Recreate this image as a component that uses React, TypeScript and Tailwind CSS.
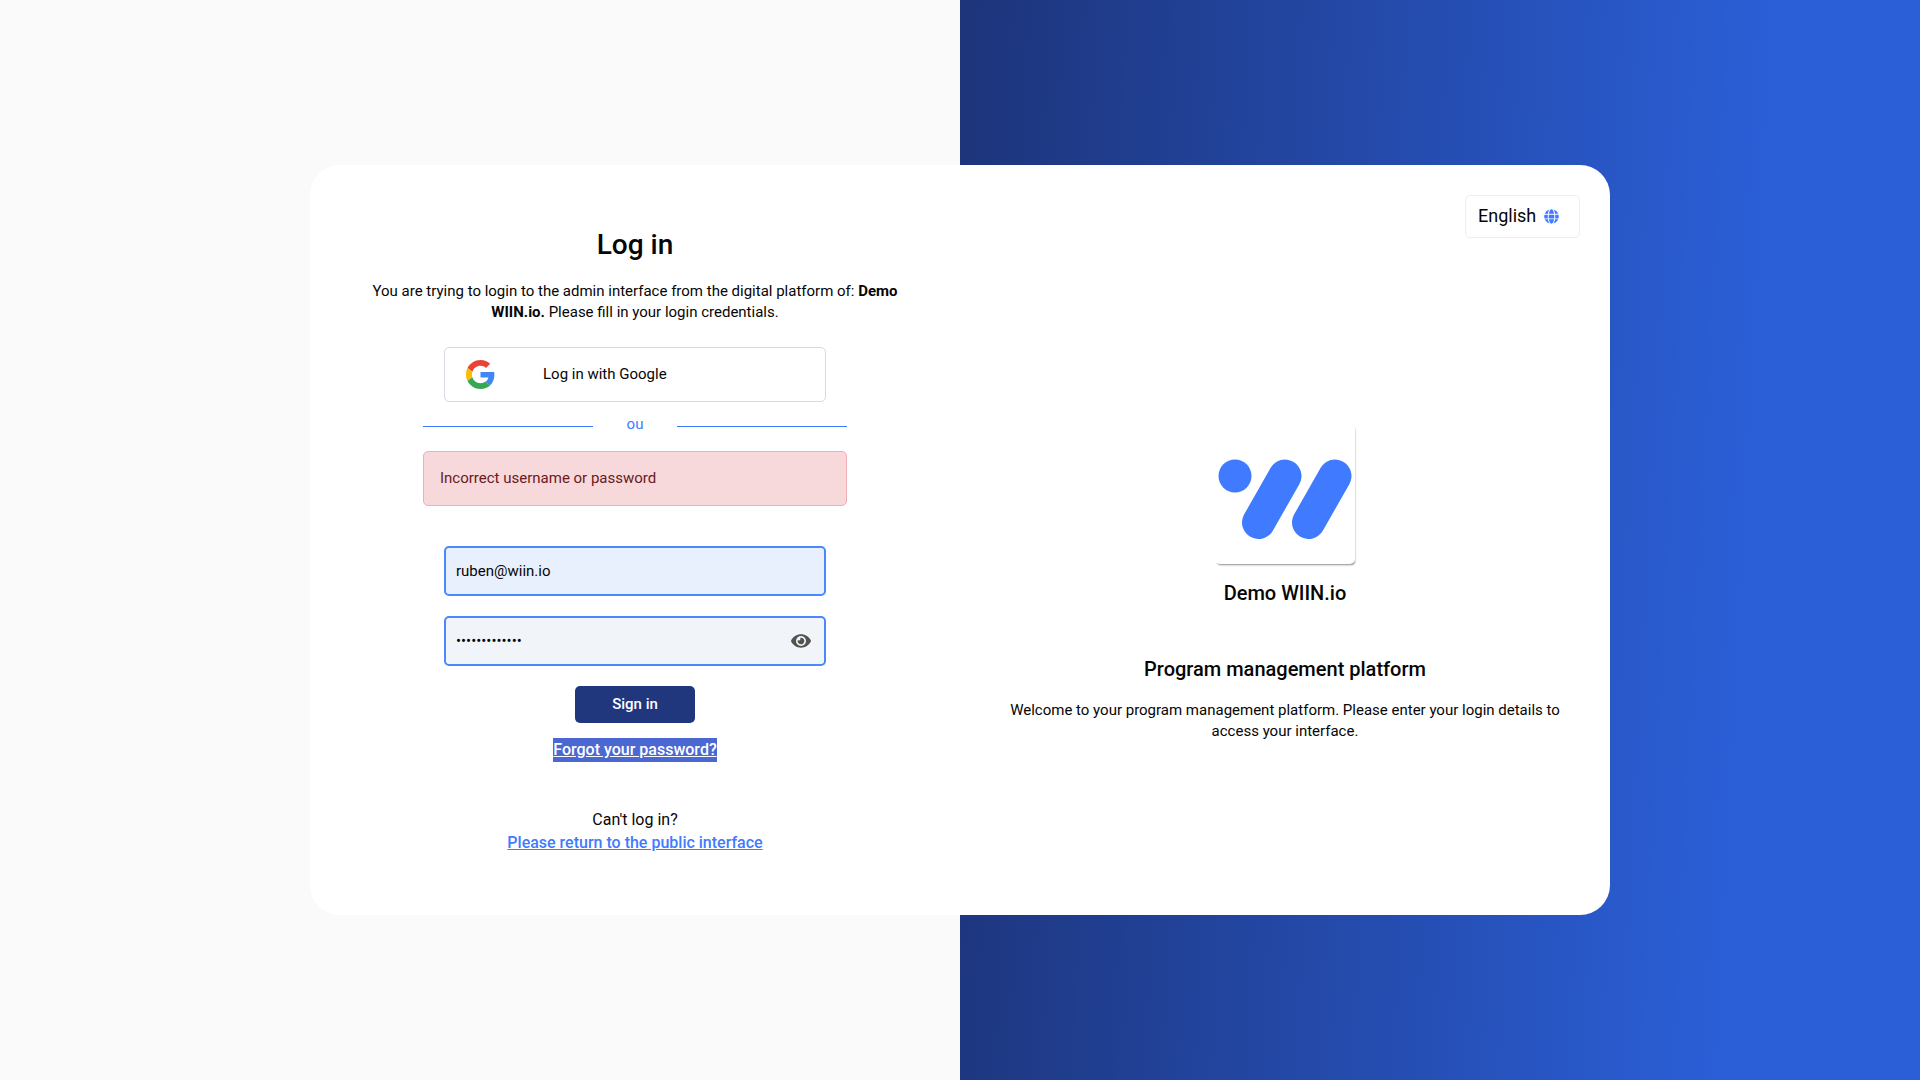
import { FaEye, FaGlobe } from "react-icons/fa";

function GoogleMark() {
  return (
    <svg viewBox="0 0 48 48" className="size-[29px] shrink-0" aria-hidden="true">
      <path fill="#EA4335" d="M24 9.5c3.54 0 6.71 1.22 9.21 3.6l6.85-6.85C35.9 2.38 30.47 0 24 0 14.62 0 6.51 5.38 2.56 13.22l7.98 6.19C12.43 13.72 17.74 9.5 24 9.5z" />
      <path fill="#4285F4" d="M46.98 24.55c0-1.57-.15-3.09-.38-4.55H24v9.02h12.94c-.58 2.96-2.26 5.48-4.78 7.18l7.73 6c4.51-4.18 7.09-10.36 7.09-17.65z" />
      <path fill="#FBBC05" d="M10.53 28.59c-.48-1.45-.76-2.99-.76-4.59s.27-3.14.76-4.59l-7.98-6.19C.92 16.46 0 20.12 0 24c0 3.88.92 7.54 2.56 10.78l7.97-6.19z" />
      <path fill="#34A853" d="M24 48c6.48 0 11.93-2.13 15.89-5.81l-7.73-6c-2.15 1.45-4.92 2.3-8.16 2.3-6.26 0-11.57-4.22-13.47-9.91l-7.98 6.19C6.51 42.62 14.62 48 24 48z" />
    </svg>
  );
}

function WiinLogo() {
  return (
    <svg viewBox="0 0 140 140" className="block size-full" role="img" aria-label="WIIN.io">
      <circle cx="20" cy="52" r="16.5" fill="#407bff" />
      <g stroke="#407bff" strokeWidth="33" strokeLinecap="round">
        <path d="M70 52 43.5 98.5" />
        <path d="M120 52 93.5 98.5" />
      </g>
    </svg>
  );
}

function LoginPanel() {
  return (
    <section className="flex w-1/2 flex-col items-center px-12 pt-[59px] pb-[59px]">
      <h1 className="text-[28px] leading-[42px] font-medium">Log in</h1>
      <p className="mt-[15px] px-3 text-center text-[15px] leading-[21px]">
        You are trying to login to the admin interface from the digital platform of:{" "}
        <strong className="font-bold">Demo WIIN.io.</strong> Please fill in your login credentials.
      </p>

      <button type="button" className="mt-6 flex h-[55px] w-[382px] items-center gap-12 rounded-[5px] border border-[#d5d9ea] pl-[21px] text-[15px]">
        <GoogleMark />
        Log in with Google
      </button>

      <div className="mt-3 flex h-[22px] w-[424px] items-center text-[15px] text-[#407bff]">
        <span className="mt-[3px] h-px flex-2 bg-[#407bff]" />
        <span className="flex-1 pb-px text-center">ou</span>
        <span className="mt-[3px] h-px flex-2 bg-[#407bff]" />
      </div>

      <div role="alert" className="mt-[15px] flex h-[55px] w-[424px] items-center rounded-[5px] border border-[#f1aeb5] bg-[#f7d8db] px-4 text-[15px] text-[#6a1a21]">
        Incorrect username or password
      </div>

      <form className="mt-10 flex w-[382px] flex-col items-center gap-5" onSubmit={(e) => e.preventDefault()}>
        <input
          type="email"
          aria-label="Email"
          defaultValue="ruben@wiin.io"
          className="h-[50px] w-full rounded-[5px] border-2 border-[#4a88fb] bg-[#e8f0fe] px-[10px] text-[15px] outline-none"
        />
        <div className="flex h-[50px] w-full items-center rounded-[5px] border-2 border-[#4a88fb] bg-[#f1f5f9] pr-[13px] pl-[10px]">
          <input
            type="password"
            aria-label="Password"
            defaultValue="demopassword1"
            className="min-w-0 flex-1 bg-transparent text-[15px] outline-none"
          />
          <button type="button" aria-label="Show password" className="text-[#54524f]">
            <FaEye size={20} />
          </button>
        </div>
        <button type="submit" className="h-[37px] w-[120px] rounded-[5px] bg-[#20377d] text-[15px] font-medium text-white">
          Sign in
        </button>
      </form>

      <a href="#forgot" className="mt-[15px] bg-[#4b68d2] text-base leading-6 font-medium text-white underline">
        Forgot your password?
      </a>

      <p className="mt-[46px] text-base leading-[23px]">Can't log in?</p>
      <a href="#public" className="text-base leading-[23px] font-medium text-[#407bff] underline">
        Please return to the public interface
      </a>
    </section>
  );
}

function PlatformPanel() {
  return (
    <section className="flex w-1/2 flex-col items-center px-[30px] pt-[30px] pb-[60px]">
      <button type="button" className="flex h-[43px] w-[115px] items-center gap-2 self-end rounded-[5px] border border-[#eeeeee] pb-px pl-3 text-lg">
        English
        <FaGlobe size={15} className="text-[#407bff]" />
      </button>
      <div className="mt-[186px] size-[140px] rounded-[5px] shadow-[1px_2px_2px_-1px_rgba(0,0,0,0.45)]">
        <WiinLogo />
      </div>
      <h2 className="mt-[14px] text-xl leading-[30px] font-medium">Demo WIIN.io</h2>
      <h3 className="mt-[46px] text-xl leading-[30px] font-medium">Program management platform</h3>
      <p className="mt-4 px-3 text-center text-[15px] leading-[21px]">
        Welcome to your program management platform. Please enter your login details to access your interface.
      </p>
    </section>
  );
}

export default function App() {
  return (
    <div className="relative flex min-h-screen items-center justify-center bg-[#fafafa] font-[Roboto,sans-serif] text-[#060606]">
      <div className="absolute inset-y-0 right-0 w-1/2 bg-[linear-gradient(93deg,#1d347a_0%,#2b5fd8_81%)]" />
      <main className="relative flex min-h-[750px] w-full max-w-[1300px] rounded-[30px] bg-white">
        <LoginPanel />
        <PlatformPanel />
      </main>
    </div>
  );
}
